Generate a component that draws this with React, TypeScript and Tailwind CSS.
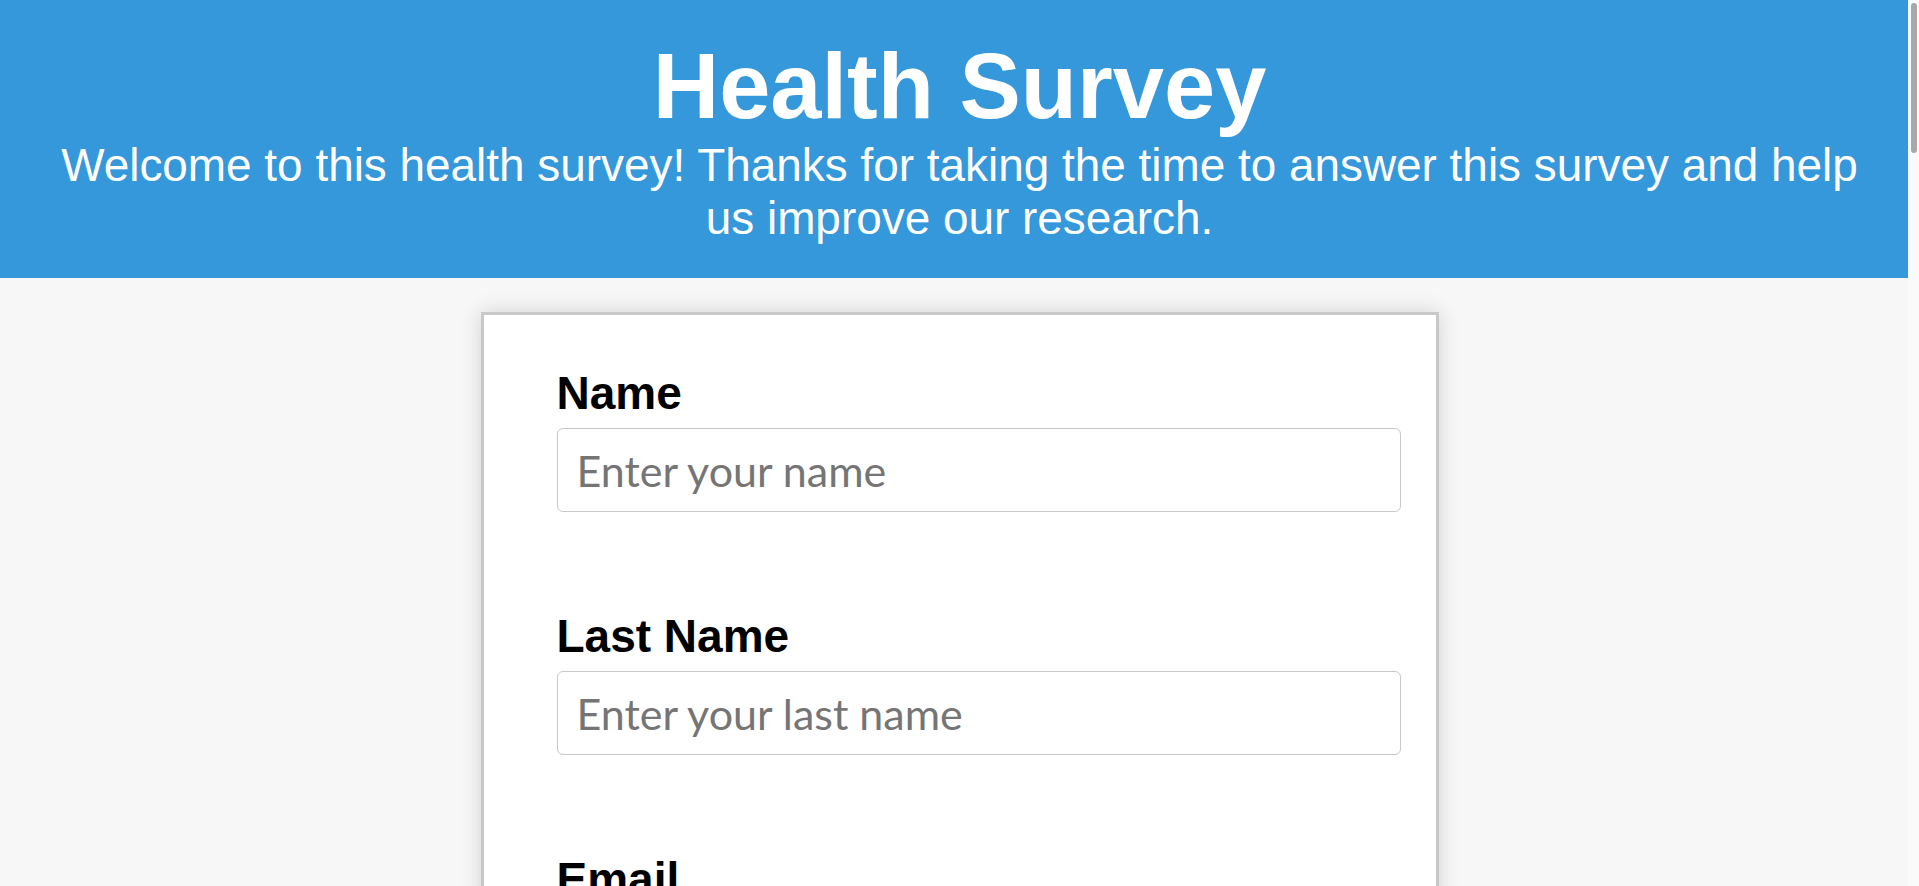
import React from "react";

type Field = { label: string; placeholder: string; type?: string };

const fields: Field[] = [
  { label: "Name", placeholder: "Enter your name" },
  { label: "Last Name", placeholder: "Enter your last name" },
  { label: "Email", placeholder: "Enter your email", type: "email" },
  { label: "Age", placeholder: "Enter your age", type: "number" },
  { label: "Height (cm)", placeholder: "Enter your height", type: "number" },
  { label: "Weight (kg)", placeholder: "Enter your weight", type: "number" },
  { label: "City", placeholder: "Enter your city" },
  { label: "Occupation", placeholder: "Enter your occupation" },
  { label: "Hours of sleep per night", placeholder: "Enter hours of sleep", type: "number" },
  { label: "Glasses of water per day", placeholder: "Enter glasses of water", type: "number" },
  { label: "Exercise per week (hours)", placeholder: "Enter hours of exercise", type: "number" },
  { label: "Medications", placeholder: "Enter your medications" },
  { label: "Allergies", placeholder: "Enter your allergies" },
  { label: "Chronic conditions", placeholder: "Enter any chronic conditions" },
  { label: "Family doctor", placeholder: "Enter your doctor's name" },
  { label: "Emergency contact", placeholder: "Enter an emergency contact" },
  { label: "Phone", placeholder: "Enter your phone number", type: "tel" },
  { label: "Comments", placeholder: "Enter any comments" },
];

export default function App() {
  return (
    <div className="relative overflow-x-hidden bg-[#f7f7f7] font-['Liberation_Sans',Arial,sans-serif]">
      <div className="w-screen">
        <header className="bg-[#3598db] px-[40px] pt-[34px] pb-[34px] text-center text-white">
          <h1 className="text-[92px] font-bold leading-[105px]">Health Survey</h1>
          <p className="text-[45.9px] leading-[52.5px]">
            Welcome to this health survey! Thanks for taking the time to answer this survey and help
            us improve our research.
          </p>
        </header>
        <main className="pt-[34px] pb-[34px]">
          <form
            className="mx-auto min-h-[4853px] w-[958px] border-[3px] border-[#c8c8c8] bg-white pt-[52px] pl-[73px] pr-[35px] pb-[60px] shadow-[0_0_20px_rgba(0,0,0,0.15)]"
            onSubmit={(e) => e.preventDefault()}
          >
            {fields.map((f) => (
              <div key={f.label} className="mb-[98px]">
                <label className="block text-[46px] font-bold leading-[53px] text-black">
                  {f.label}
                </label>
                <input
                  type={f.type ?? "text"}
                  placeholder={f.placeholder}
                  className="mt-[8px] block h-[84px] w-full rounded-[6px] border border-[#c8c8c8] bg-white pl-[19px] font-['Lato',sans-serif] text-[43px] text-black outline-none placeholder:text-[#757575]"
                />
              </div>
            ))}
            <button
              type="submit"
              className="block w-full rounded-[6px] bg-[#3598db] py-[16px] text-[46px] font-bold text-white"
            >
              Submit
            </button>
          </form>
        </main>
      </div>
      <div className="fixed top-0 right-0 h-screen w-[11px] bg-[#fafafa]">
        <div className="mt-[3px] ml-[3px] h-[150px] w-[6px] rounded-full bg-[#a8a8a8]" />
      </div>
    </div>
  );
}
